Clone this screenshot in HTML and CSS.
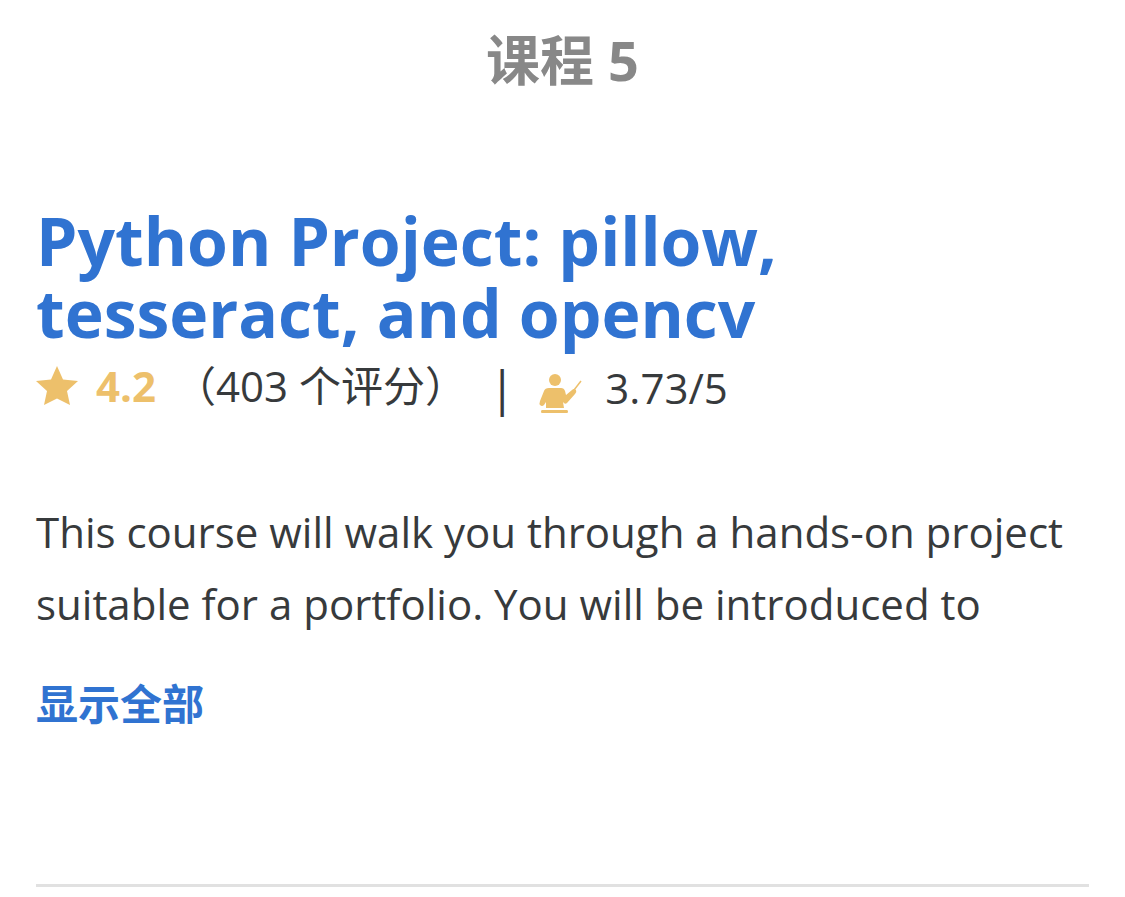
FILE: index.html
```html
<!DOCTYPE html>
<html lang="zh-CN">
<head>
<meta charset="utf-8">
<meta name="viewport" content="width=device-width, initial-scale=1">
<title>课程 5</title>
<link rel="stylesheet" href="styles.css">
</head>
<body>
<main class="course">
  <h2 class="course-label">课程 5</h2>
  <h3 class="course-title"><a href="#course">Python Project: pillow, tesseract, and opencv</a></h3>
  <div class="ratings">
    <svg class="star" viewBox="0 0 42 40" aria-hidden="true"><path d="M21 0L27 13.500 42 15 31 25 34 39 21 32.500 8 39 11 25 0 15 15 13.500Z"/></svg>
    <span class="score">4.2</span>
    <span class="count">（403 个评分）</span>
    <span class="instructor">
      <span class="divider">|</span>
      <svg class="teacher" viewBox="0 -10 44 52" aria-hidden="true"><circle cx="17" cy="8" r="6"/><path d="M11 16H23Q26 16 27 19L28 23 34 18Q36 16 38 18 39 20 37 22L29 31Q27 33 25 30L26 36H8V30L6 33Q4 35 2 33 1 32 2 29L6 19Q7 16 11 16ZM4 38H29Q30 38 30 39.500T29 41H4Q3 41 3 39.500T4 38Z"/><path d="M36 18L43 9" fill="none" stroke="#edc06b" stroke-width="1.500"/></svg>
      <span class="teacher-score">3.73/5</span>
    </span>
  </div>
  <p class="description">This course will walk you through a hands-on project suitable for a portfolio. You will be introduced to</p>
  <button class="show-all" type="button">显示全部</button>
</main>
</body>
</html>
```
FILE: styles.css
```css
* { box-sizing: border-box; }
body {
  margin: 0;
  background: #fff;
  color: #373a3c;
  font-family: "Open Sans", "Noto Sans CJK SC", sans-serif;
}
.course {
  margin: 0 36px;
  padding: 24px 0 149px;
  border-bottom: 3px solid #e1e1e1;
}
.course-label {
  margin: 0;
  color: #888;
  font-size: 54px;
  font-weight: 700;
  line-height: 72px;
  text-align: center;
}
.course-title {
  max-width: 800px;
  margin: 108px 0 0;
  font-size: 66px;
  font-weight: 700;
  line-height: 72px;
}
.course-title a { color: #3073d1; text-decoration: none; }
.ratings {
  display: flex;
  align-items: center;
  font-size: 42px;
  line-height: 72px;
}
.star { width: 42px; height: 40px; fill: #edc06b; }
.score { margin-left: 18px; color: #edc06b; font-weight: 700; }
.count { margin-left: 18px; }
.instructor {
  display: flex;
  align-items: center;
  margin-left: 22px;
  padding-top: 4px;
}
.divider { font-size: 48px; }
.teacher { width: 44px; height: 52px; margin-left: 23px; fill: #edc06b; }
.teacher-score { margin-left: 23px; }
.description {
  margin: 72px 0 0;
  font-size: 42px;
  line-height: 72px;
}
.show-all {
  display: block;
  margin: 32px 0 0;
  padding: 0;
  border: 0;
  background: none;
  color: #3073d1;
  font: inherit;
  font-size: 42px;
  font-weight: 700;
  line-height: 63px;
}
```
